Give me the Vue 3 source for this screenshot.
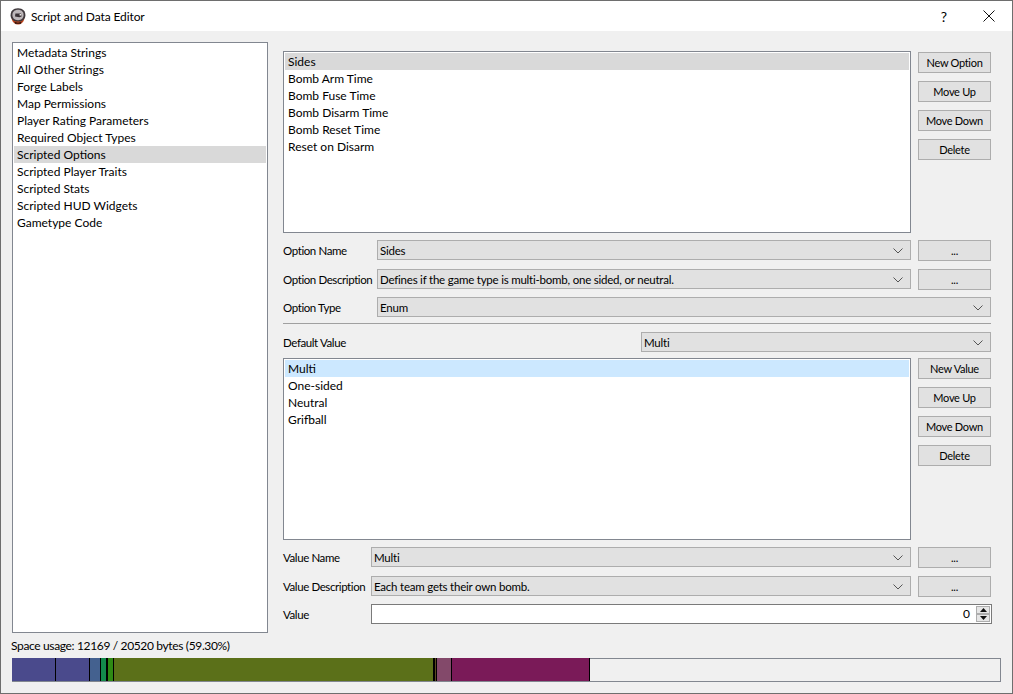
<template>
  <div class="window">
    <header class="titlebar">
      <svg class="app-icon" width="16" height="17" viewBox="0 0 16 17">
        <path d="M1.5 10.5 C2.5 14.5 5 16.5 8 16.5 C11 16.5 13.5 14.5 14.5 10.5 Z" fill="#c4451c" />
        <path d="M4.5 13.5 C6 15 10 15 11.5 13.5 L11 15.8 L5 15.8 Z" fill="#2a1510" />
        <path d="M8 .3 C3 .3 .6 3.2 .6 7.2 C.6 10.6 3 13.6 8 13.6 C13 13.6 15.4 10.6 15.4 7.2 C15.4 3.2 13 .3 8 .3 Z" fill="#3f383c" />
        <path d="M8 1.8 C4.4 1.8 2.4 3.9 2.4 7 C2.4 9.8 4.2 12.2 8 12.2 C11.8 12.2 13.6 9.8 13.6 7 C13.6 3.9 11.6 1.8 8 1.8 Z" fill="#bdb7ba" />
        <path d="M5.4 5.5 L11 5.5 L11.6 8.4 L9.4 9.2 L5 8.4 Z" fill="#3a3236" />
        <path d="M9.6 6 h1.5 v1.5 h-1.5 Z" fill="#f2eeee" />
      </svg>
      <span class="title">Script and Data Editor</span>
      <span class="help">?</span>
      <svg class="close" width="12" height="12" viewBox="0 0 12 12">
        <path d="M.5 .5 L11.5 11.5 M11.5 .5 L.5 11.5" stroke="#111" stroke-width="1" fill="none" />
      </svg>
    </header>

    <div class="body">
      <main class="main">
        <ul class="list sections">
          <li
            v-for="s in sections"
            :key="s"
            :class="{ current: s === 'Scripted Options' }"
          >{{ s }}</li>
        </ul>

        <section class="editor">
          <div class="list-row">
            <ul class="list items">
              <li
                v-for="o in options"
                :key="o"
                :class="{ current: o === 'Sides' }"
              >{{ o }}</li>
            </ul>
            <div class="buttons">
              <button v-for="b in optionButtons" :key="b" class="btn">{{ b }}</button>
            </div>
          </div>

          <div class="field r-name">
            <label class="lbl-wide">Option Name</label>
            <div class="combo"><span>Sides</span><svg class="chev" width="10" height="6" viewBox="0 0 10 6"><path d="M.5 .5 L5 5 L9.5 .5" /></svg></div>
            <button class="btn">...</button>
          </div>
          <div class="field r-desc">
            <label class="lbl-wide">Option Description</label>
            <div class="combo"><span>Defines if the game type is multi-bomb, one sided, or neutral.</span><svg class="chev" width="10" height="6" viewBox="0 0 10 6"><path d="M.5 .5 L5 5 L9.5 .5" /></svg></div>
            <button class="btn">...</button>
          </div>
          <div class="field r-type">
            <label class="lbl-wide">Option Type</label>
            <div class="combo"><span>Enum</span><svg class="chev" width="10" height="6" viewBox="0 0 10 6"><path d="M.5 .5 L5 5 L9.5 .5" /></svg></div>
          </div>

          <hr class="sep" />

          <div class="field r-default">
            <label class="lbl-default">Default Value</label>
            <div class="combo"><span>Multi</span><svg class="chev" width="10" height="6" viewBox="0 0 10 6"><path d="M.5 .5 L5 5 L9.5 .5" /></svg></div>
          </div>

          <div class="list-row r-values">
            <ul class="list items">
              <li
                v-for="v in values"
                :key="v"
                :class="{ selected: v === 'Multi' }"
              >{{ v }}</li>
            </ul>
            <div class="buttons">
              <button v-for="b in valueButtons" :key="b" class="btn">{{ b }}</button>
            </div>
          </div>

          <div class="field r-vname">
            <label class="lbl-narrow">Value Name</label>
            <div class="combo"><span>Multi</span><svg class="chev" width="10" height="6" viewBox="0 0 10 6"><path d="M.5 .5 L5 5 L9.5 .5" /></svg></div>
            <button class="btn">...</button>
          </div>
          <div class="field r-vdesc">
            <label class="lbl-narrow">Value Description</label>
            <div class="combo"><span>Each team gets their own bomb.</span><svg class="chev" width="10" height="6" viewBox="0 0 10 6"><path d="M.5 .5 L5 5 L9.5 .5" /></svg></div>
            <button class="btn">...</button>
          </div>
          <div class="field r-value">
            <label class="lbl-narrow">Value</label>
            <div class="spin">
              <span class="spin-val">0</span>
              <div class="spin-btns">
                <span class="arrow"><svg width="7" height="4" viewBox="0 0 7 4"><path d="M3.5 0 L7 4 L0 4 Z" /></svg></span>
                <span class="arrow"><svg width="7" height="4" viewBox="0 0 7 4"><path d="M0 0 L7 0 L3.5 4 Z" /></svg></span>
              </div>
            </div>
          </div>
        </section>
      </main>

      <footer class="usage">
        <div class="usage-text">Space usage: 12169 / 20520 bytes (59.30%)</div>
        <div class="bar">
          <div
            v-for="(seg, i) in segments"
            :key="i"
            class="seg"
            :style="{ width: seg.w + 'px', background: seg.c }"
          ></div>
        </div>
      </footer>
    </div>
  </div>
</template>

<script setup>
const sections = [
  'Metadata Strings',
  'All Other Strings',
  'Forge Labels',
  'Map Permissions',
  'Player Rating Parameters',
  'Required Object Types',
  'Scripted Options',
  'Scripted Player Traits',
  'Scripted Stats',
  'Scripted HUD Widgets',
  'Gametype Code',
];

const options = [
  'Sides',
  'Bomb Arm Time',
  'Bomb Fuse Time',
  'Bomb Disarm Time',
  'Bomb Reset Time',
  'Reset on Disarm',
];

const values = ['Multi', 'One-sided', 'Neutral', 'Grifball'];

const optionButtons = ['New Option', 'Move Up', 'Move Down', 'Delete'];
const valueButtons = ['New Value', 'Move Up', 'Move Down', 'Delete'];

// usage bar, widths read off the reference
const segments = [
  { w: 43, c: '#4a4a8c' },
  { w: 1, c: '#000' },
  { w: 33, c: '#4a4a8c' },
  { w: 1, c: '#000' },
  { w: 10, c: '#44618f' },
  { w: 1, c: '#000' },
  { w: 5, c: '#138a4b' },
  { w: 2, c: '#000' },
  { w: 5, c: '#2f8a14' },
  { w: 1, c: '#000' },
  { w: 319, c: '#5b7019' },
  { w: 2, c: '#000' },
  { w: 1, c: '#5b4a20' },
  { w: 1, c: '#000' },
  { w: 14, c: '#83496a' },
  { w: 1, c: '#000' },
  { w: 137, c: '#7a1a58' },
  { w: 1, c: '#000' },
];
</script>

<style>
html, body { margin: 0; padding: 0; }
</style>

<style scoped>
* { box-sizing: border-box; }

.window {
  width: 1013px;
  height: 694px;
  border: 1px solid #6e6e6e;
  background: #f0f0f0;
  font-family: Lato, "Noto Sans", sans-serif;
  font-size: 12px;
  color: #000;
  display: flex;
  flex-direction: column;
  overflow: hidden;
}

.titlebar {
  height: 30px;
  flex: none;
  background: #fff;
  display: flex;
  align-items: center;
  padding-left: 9px;
}
.app-icon { flex: none; }
.title { margin-left: 5px; font-size: 12px; letter-spacing: -0.1px; }
.help { margin-left: auto; width: 12px; text-align: center; font-size: 14px; }
.close { margin-left: 33px; margin-right: 17px; }

.body { flex: 1; display: flex; flex-direction: column; padding: 11px 11px 0 11px; }
.main { display: flex; gap: 15px; height: 591px; }

.list {
  list-style: none;
  margin: 0;
  padding: 1px 1px;
  background: #fff;
  border: 1px solid #828790;
}
.list li {
  height: 17px;
  line-height: 17px;
  padding-left: 3px;
  white-space: nowrap;
}
.list li.current { background: #d9d9d9; }
.list li.selected { background: #cce8ff; }

.sections { width: 256px; height: 591px; }

.editor { width: 708px; padding-top: 9px; }
.list-row { display: flex; gap: 7px; }
.items { width: 628px; height: 182px; padding-top: 1px; }
.buttons { display: flex; flex-direction: column; gap: 8px; padding-top: 1px; }

.btn {
  width: 73px;
  height: 21px;
  flex: none;
  padding: 0;
  background: #e1e1e1;
  border: 1px solid #adadad;
  font-family: inherit;
  font-size: 11px;
  letter-spacing: -0.3px;
  color: #000;
  text-align: center;
}

.field { display: flex; align-items: flex-start; height: 21px; }
.field label {
  flex: none;
  line-height: 21px;
  white-space: nowrap;
  font-size: 11.5px;
  letter-spacing: -0.4px;
}
.lbl-wide { width: 94px; }
.lbl-narrow { width: 88px; }
.lbl-default { width: 358px; }

.combo {
  flex: 1;
  height: 20px;
  background: #e1e1e1;
  border: 1px solid #adadad;
  display: flex;
  align-items: center;
  justify-content: space-between;
  padding: 1px 7px 0 2px;
  line-height: 18px;
  font-size: 11.5px;
  letter-spacing: -0.22px;
}
.field .btn { margin-left: 7px; }
.chev { flex: none; }
.chev path { fill: none; stroke: #555; stroke-width: 1; }

.r-name { margin-top: 7px; }
.r-desc { margin-top: 8px; }
.r-type { margin-top: 7px; }
.r-default { margin-top: 8px; }
.r-values { margin-top: 5px; }
.r-values .buttons { padding-top: 0; }
.r-vname { margin-top: 7px; }
.r-vdesc { margin-top: 8px; }
.r-value { margin-top: 7px; }

.sep {
  margin: 5px 0 0;
  height: 1px;
  border: 0;
  background: #a0a0a0;
}

.spin {
  flex: 1;
  height: 20px;
  background: #fff;
  border: 1px solid #7a7a7a;
  display: flex;
  align-items: center;
  justify-content: flex-end;
  line-height: 18px;
  margin-right: -1px;
}
.spin-val { margin-right: 6px; }
.spin-btns { width: 14px; height: 16px; margin-right: 1px; display: flex; flex-direction: column; }
.arrow {
  flex: 1;
  background: #e6e6e6;
  border: 1px solid #adadad;
  display: flex;
  align-items: center;
  justify-content: center;
}
.arrow svg { display: block; }
.arrow path { fill: #111; }

.usage-text {
  margin-top: 4px;
  margin-left: -1px;
  height: 17px;
  line-height: 17px;
  letter-spacing: -0.35px;
}
.bar {
  margin-top: 4px;
  width: 989px;
  height: 24px;
  border: 1px solid #828790;
  border-left: 0;
  display: flex;
}
.seg { height: calc(100% + 1px); margin-top: -1px; flex: none; }
</style>
